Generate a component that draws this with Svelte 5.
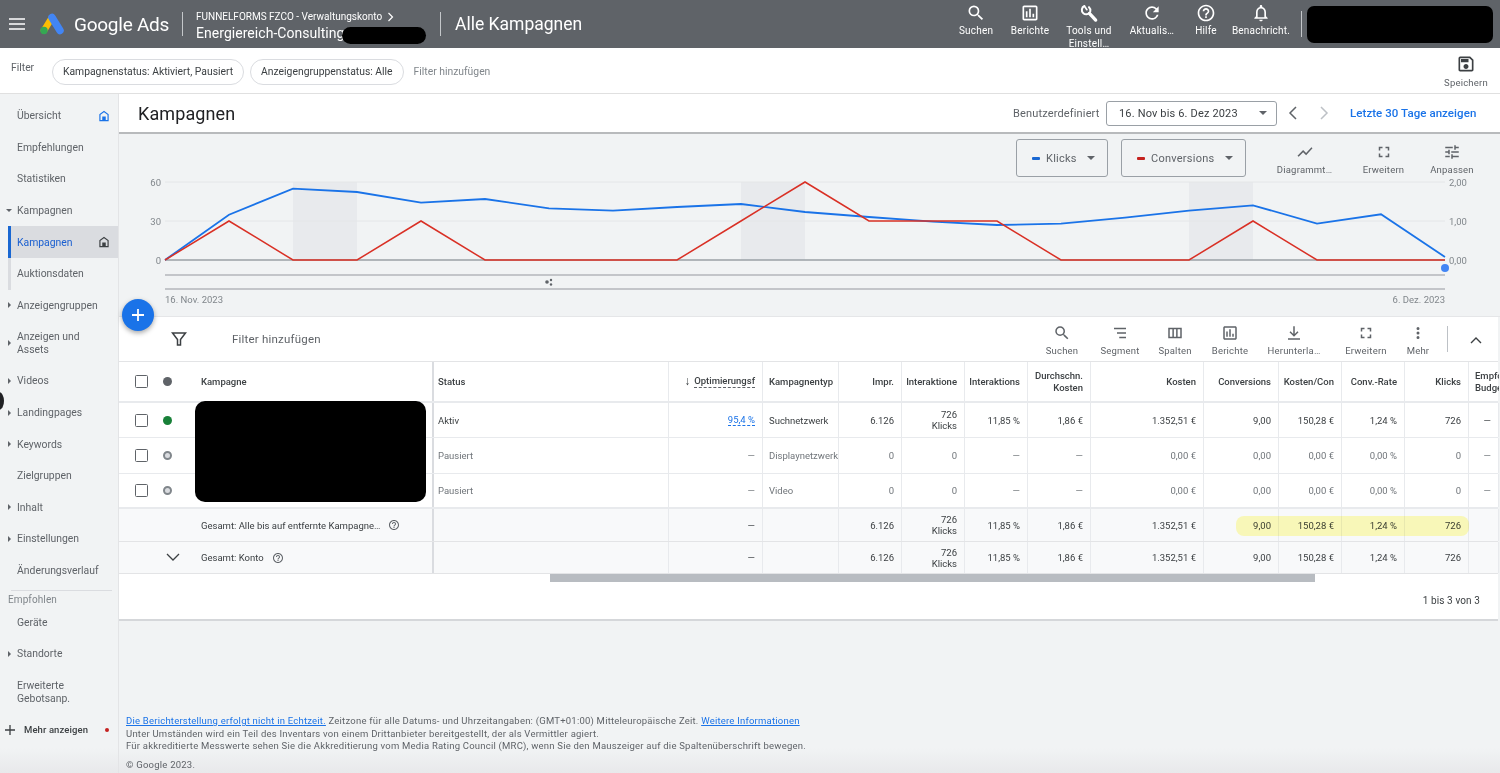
<script>
  const icons = {
    search: 'M15.5 14h-.79l-.28-.27A6.471 6.471 0 0 0 16 9.5 6.5 6.5 0 1 0 9.5 16c1.61 0 3.09-.59 4.23-1.57l.27.28v.79l5 4.99L20.49 19l-4.99-5zm-6 0C7.01 14 5 11.99 5 9.5S7.01 5 9.5 5 14 7.01 14 9.5 11.99 14 9.5 14z',
    report: 'M19 3H5c-1.1 0-2 .9-2 2v14c0 1.1.9 2 2 2h14c1.1 0 2-.9 2-2V5c0-1.1-.9-2-2-2zm0 16H5V5h14v14zM7 10h2v7H7zm4-3h2v10h-2zm4 6h2v4h-2z',
    refresh: 'M17.65 6.35A7.958 7.958 0 0 0 12 4c-4.42 0-7.99 3.58-7.99 8s3.57 8 7.99 8c3.73 0 6.84-2.55 7.73-6h-2.08A5.99 5.99 0 0 1 12 18c-3.31 0-6-2.69-6-6s2.69-6 6-6c1.66 0 3.14.69 4.22 1.78L13 11h7V4l-2.35 2.35z',
    help: 'M11 18h2v-2h-2v2zm1-16C6.48 2 2 6.48 2 12s4.48 10 10 10 10-4.48 10-10S17.52 2 12 2zm0 18c-4.41 0-8-3.59-8-8s3.59-8 8-8 8 3.59 8 8-3.59 8-8 8zm0-14c-2.21 0-4 1.79-4 4h2c0-1.1.9-2 2-2s2 .9 2 2c0 2-3 1.75-3 5h2c0-2.25 3-2.5 3-5 0-2.21-1.79-4-4-4z',
    bell: 'M12 22c1.1 0 2-.9 2-2h-4c0 1.1.9 2 2 2zm6-6v-5c0-3.07-1.63-5.64-4.5-6.32V4c0-.83-.67-1.5-1.5-1.5s-1.5.67-1.5 1.5v.68C7.64 5.36 6 7.92 6 11v5l-2 2v1h16v-1l-2-2zm-2 1H8v-6c0-2.48 1.51-4.5 4-4.5s4 2.02 4 4.5v6z',
    save: 'M17 3H5a2 2 0 0 0-2 2v14c0 1.1.9 2 2 2h14c1.1 0 2-.9 2-2V7l-4-4zm2 16H5V5h11.17L19 7.83V19zm-7-7c-1.66 0-3 1.34-3 3s1.34 3 3 3 3-1.34 3-3-1.34-3-3-3zM6 6h9v4H6z',
    chart: 'M3.5 18.49l6-6.01 4 4L22 6.92l-1.41-1.41-7.09 7.97-4-4L2 16.99z',
    full: 'M7 14H5v5h5v-2H7v-3zm-2-4h2V7h3V5H5v5zm12 7h-3v2h5v-5h-2v3zM14 5v2h3v3h2V5h-5z',
    tune: 'M3 17v2h6v-2H3zM3 5v2h10V5H3zm10 16v-2h8v-2h-8v-2h-2v6h2zM7 9v2H3v2h4v2h2V9H7zm14 4v-2H11v2h10zm-6-4h2V7h4V5h-4V3h-2v6z',
    segment: 'M4 5h16v2H4zM8 11h12v2H8zM11 17h9v2h-9z',
    columns: 'M3 5h18v14H3zm2 2v10h3.5V7zm5.5 0v10h3V7zm5 0v10H19V7z',
    download: 'M13 3h-2v10.2L7.4 9.6 6 11l6 6 6-6-1.4-1.4-3.6 3.6zM4 19v2h16v-2z',
    more: 'M12 8a2 2 0 1 0 0-4 2 2 0 0 0 0 4zm0 2a2 2 0 1 0 0 4 2 2 0 0 0 0-4zm0 6a2 2 0 1 0 0 4 2 2 0 0 0 0-4z',
    home: 'M12 3 4 9v12h16V9zm6 16h-3v-6H9v6H6v-9l6-4.5 6 4.5z',
  };

  const topActions = [
    { icon: 'search', label: 'Suchen', w: 54 },
    { icon: 'report', label: 'Berichte', w: 54 },
    { icon: 'wrench', label: 'Tools und Einstell…', w: 64, wrap: true },
    { icon: 'refresh', label: 'Aktualis…', w: 62 },
    { icon: 'help', label: 'Hilfe', w: 46 },
    { icon: 'bell', label: 'Benachricht.', w: 64 },
  ];

  const chartTools = [
    { icon: 'chart', label: 'Diagrammt…', w: 79 },
    { icon: 'full', label: 'Erweitern', w: 79 },
    { icon: 'tune', label: 'Anpassen', w: 58 },
  ];

  const tableTools = [
    { icon: 'search', label: 'Suchen', w: 58 },
    { icon: 'segment', label: 'Segment', w: 58 },
    { icon: 'columns', label: 'Spalten', w: 52 },
    { icon: 'report', label: 'Berichte', w: 58 },
    { icon: 'download', label: 'Herunterla…', w: 70 },
    { icon: 'full', label: 'Erweitern', w: 74 },
    { icon: 'more', label: 'Mehr', w: 30 },
  ];

  const nav = [
    { t: 'Übersicht', home: 'blue' },
    { t: 'Empfehlungen' },
    { t: 'Statistiken' },
    { t: 'Kampagnen', arrow: 'down' },
    { t: 'Kampagnen', sel: true, home: 'dark', sub: true },
    { t: 'Auktionsdaten', sub: true },
    { t: 'Anzeigengruppen', arrow: 'right' },
    { t: 'Anzeigen und\nAssets', arrow: 'right', tall: true },
    { t: 'Videos', arrow: 'right' },
    { t: 'Landingpages', arrow: 'right' },
    { t: 'Keywords', arrow: 'right' },
    { t: 'Zielgruppen' },
    { t: 'Inhalt', arrow: 'right' },
    { t: 'Einstellungen', arrow: 'right' },
    { t: 'Änderungsverlauf' },
  ];
  const nav2 = [
    { t: 'Geräte' },
    { t: 'Standorte', arrow: 'right' },
    { t: 'Erweiterte\nGebotsanp.', tall: true },
  ];

  const rows = [
    { dot: 'on', status: 'Aktiv', opt: '95,4 %', type: 'Suchnetzwerk', v: ['6.126', '726\nKlicks', '11,85 %', '1,86 €', '1.352,51 €', '9,00', '150,28 €', '1,24 %', '726', '—'] },
    { dot: 'off', status: 'Pausiert', opt: '—', type: 'Displaynetzwerk', v: ['0', '0', '—', '—', '0,00 €', '0,00', '0,00 €', '0,00 %', '0', '—'], dim: true },
    { dot: 'off', status: 'Pausiert', opt: '—', type: 'Video', v: ['0', '0', '—', '—', '0,00 €', '0,00', '0,00 €', '0,00 %', '0', '—'], dim: true },
  ];
  const totals = ['6.126', '726\nKlicks', '11,85 %', '1,86 €', '1.352,51 €', '9,00', '150,28 €', '1,24 %', '726', ''];

  const heads = ['Impr.', 'Interaktione', 'Interaktions', 'Durchschn.\nKosten', 'Kosten', 'Conversions', 'Kosten/Con', 'Conv.-Rate', 'Klicks'];

  const X = (i) => 165 + i * 64;
  const blue = [260, 214.7, 188.7, 192, 202.7, 199, 208.3, 210.7, 207, 204, 212, 217, 221.6, 225, 223.7, 217.7, 210.7, 205.3, 223.7, 214.3, 257];
  const red = [260, 221, 260, 260, 221, 260, 260, 260, 260, 221, 182, 221, 221, 221, 260, 260, 260, 221, 260, 260, 260];
  const pts = (a) => a.map((y, i) => `${X(i)},${y - 134}`).join(' ');
  const bands = [293, 741, 1189];
</script>

{#snippet icon(name, size = 20)}
  {#if name === 'wrench'}
    <svg class="ico" width={size} height={size} viewBox="0 0 24 24" fill="none" stroke="currentColor" stroke-linecap="round">
      <path d="M6.500 3.600A5.200 5.200 0 1 0 13.600 9.800 5.200 5.200 0 0 0 12 5" stroke-width="2.400" />
      <path d="M12.500 12.500 20 20.500" stroke-width="4" />
      <path d="M7 4.500 9.500 8" stroke-width="2" />
    </svg>
  {:else}
    <svg class="ico" width={size} height={size} viewBox="0 0 24 24"><path d={icons[name]} fill="currentColor" /></svg>
  {/if}
{/snippet}

{#snippet hint()}
  <svg class="hint" width="12" height="12" viewBox="0 0 24 24"><path d={icons.help} fill="currentColor" /></svg>
{/snippet}

{#snippet cells(values, dim)}
  {#each values as val}
    <div class="cell right" class:dim>{#each val.split('\n') as line}<span class="ln">{line}</span>{/each}</div>
  {/each}
{/snippet}

<div class="page">
  <span class="edge"></span>

  <header class="top">
    <svg class="burger" width="16" height="12" viewBox="0 0 16 12"><path d="M0 1h16M0 6h16M0 11h16" stroke="#fff" stroke-width="1.7" /></svg>
    <svg class="logo" width="24" height="22" viewBox="0 0 24 22">
      <path d="M12 4.500 4 17.500" stroke="#fbbc04" stroke-width="6.500" stroke-linecap="round" />
      <path d="M12 4.500 20 17.500" stroke="#4285f4" stroke-width="7.500" stroke-linecap="round" />
      <circle cx="4" cy="17.500" r="3.700" fill="#34a853" />
    </svg>
    <span class="brand">Google Ads</span>
    <span class="vr first"></span>
    <div class="acct">
      <div class="acct-top">FUNNELFORMS FZCO - Verwaltungskonto
        <svg width="9" height="10" viewBox="0 0 9 10"><path d="M2.500 1l4 4-4 4" fill="none" stroke="#fff" stroke-width="1.200" /></svg>
      </div>
      <div class="acct-name"><span class="acct-text">Energiereich-Consulting</span><span class="mask pill"></span></div>
    </div>
    <span class="vr second"></span>
    <span class="page-title">Alle Kampagnen</span>
    <nav class="top-actions">
      {#each topActions as a}
        <div class="top-act" style="width:{a.w}px">
          {@render icon(a.icon, 20)}
          <span class="top-label" class:wrap={a.wrap}>{a.label}</span>
        </div>
      {/each}
    </nav>
    <span class="vr third"></span>
    <span class="mask account"></span>
  </header>

  <section class="filters">
    <span class="f-label">Filter</span>
    <span class="chip">Kampagnenstatus: Aktiviert, Pausiert</span>
    <span class="chip">Anzeigengruppenstatus: Alle</span>
    <span class="f-add">Filter hinzufügen</span>
    <div class="save">
      {@render icon('save', 20)}
      <span>Speichern</span>
    </div>
  </section>

  <div class="body">
    <aside class="side">
      {#snippet navItem(n)}
        <div class="nav" class:sel={n.sel} class:tall={n.tall} class:sub={n.sub}>
          {#if n.arrow}<span class="arr {n.arrow}"></span>{/if}
          <span class="nav-t">{#each n.t.split('\n') as line}<span class="ln">{line}</span>{/each}</span>
          {#if n.home}
            <svg class="home {n.home}" width="14" height="14" viewBox="0 0 24 24"><path d={icons.home} fill="currentColor" /></svg>
          {/if}
        </div>
      {/snippet}
      {#each nav as n}{@render navItem(n)}{/each}
      <div class="side-rule"></div>
      <div class="side-head">Empfohlen</div>
      {#each nav2 as n}{@render navItem(n)}{/each}
      <div class="more-row">
        <svg width="12" height="12" viewBox="0 0 12 12"><path d="M6 1v10M1 6h10" stroke="#3c4043" stroke-width="1.300" /></svg>
        <span>Mehr anzeigen</span>
        <i></i>
      </div>
    </aside>

    <main class="main">
      <span class="fab">
        <svg width="16" height="16" viewBox="0 0 16 16"><path d="M8 2v12M2 8h12" stroke="#fff" stroke-width="1.800" /></svg>
      </span>

      <div class="sub-head">
        <h1>Kampagnen</h1>
        <span class="range-label">Benutzerdefiniert</span>
        <div class="range">16. Nov bis 6. Dez 2023<span class="caret"></span></div>
        <svg class="nav-chev" width="10" height="14" viewBox="0 0 10 14"><path d="M8 1 2 7l6 6" fill="none" stroke="#5f6368" stroke-width="1.500" /></svg>
        <svg class="nav-chev faint" width="10" height="14" viewBox="0 0 10 14"><path d="M2 1l6 6-6 6" fill="none" stroke="#bdc1c6" stroke-width="1.500" /></svg>
        <span class="last30">Letzte 30 Tage anzeigen</span>
      </div>

      <section class="chart-panel">
        <div class="chart-tools">
          <div class="metric klicks"><i class="b"></i>Klicks<span class="caret"></span></div>
          <div class="metric conv"><i class="r"></i>Conversions<span class="caret"></span></div>
          {#each chartTools as t}
            <div class="tool" style="width:{t.w}px">
              {@render icon(t.icon, 18)}
              <span>{t.label}</span>
            </div>
          {/each}
        </div>
        <svg class="plot" width="1381" height="182" viewBox="119 0 1381 182">
          {#each bands as b}<rect x={b} y="48" width="64" height="78" fill="#e8eaed" />{/each}
          <path d="M165 48H1445M165 87H1445" stroke="#e4e6e8" stroke-width="1" />
          <path d="M165 126H1445" stroke="#9aa0a6" stroke-width="1.500" />
          <path d="M165 141H1445M165 155H1445" stroke="#b4b7ba" stroke-width="1.500" />
          <polyline points={pts(blue)} fill="none" stroke="#1a73e8" stroke-width="1.800" />
          <polyline points={pts(red)} fill="none" stroke="#d93025" stroke-width="1.500" />
          <circle cx="1445" cy="134" r="4" fill="#4285f4" />
          <g class="tick">
            <text x="161" y="52" text-anchor="end">60</text>
            <text x="161" y="91" text-anchor="end">30</text>
            <text x="161" y="130" text-anchor="end">0</text>
            <text x="1449" y="52">2,00</text>
            <text x="1449" y="91">1,00</text>
            <text x="1449" y="130">0,00</text>
            <text x="165" y="169">16. Nov. 2023</text>
            <text x="1445" y="169" text-anchor="end">6. Dez. 2023</text>
          </g>
          <g fill="#5f6368"><circle cx="547" cy="148" r="1.800" /><circle cx="551" cy="146" r="1.200" /><circle cx="551" cy="150.500" r="1.200" /></g>
        </svg>
      </section>

      <section class="panel">
        <div class="table-tools">
          <svg class="funnel" width="16" height="16" viewBox="0 0 16 16"><path d="M1.500 2h13L9.500 8.500V14h-3V8.500z" fill="none" stroke="#3c4043" stroke-width="1.500" /></svg>
          <span class="t-add">Filter hinzufügen</span>
          <div class="t-icons">
            {#each tableTools as t}
              <div class="tool" style="width:{t.w}px">
                {@render icon(t.icon, 18)}
                <span>{t.label}</span>
              </div>
            {/each}
          </div>
          <span class="t-rule"></span>
          <svg class="collapse" width="12" height="8" viewBox="0 0 12 8"><path d="M1 7l5-5 5 5" fill="none" stroke="#3c4043" stroke-width="1.400" /></svg>
        </div>

        <div class="grid">
          <div class="row head">
            <div class="cell frozen">
              <span class="box"></span>
              <span class="dot all"></span>
              <span class="c-name strong">Kampagne</span>
            </div>
            <div class="cell strong">Status</div>
            <div class="cell right strong opt-head"><span class="sort">↓</span><span class="dashed">Optimierungsf</span></div>
            <div class="cell strong clip">Kampagnentyp</div>
            {#each heads as h}
              <div class="cell right strong">{#each h.split('\n') as line}<span class="ln">{line}</span>{/each}</div>
            {/each}
            <div class="cell strong budget"><span class="ln">Empfohl.</span><span class="ln">Budget</span></div>
          </div>

          {#each rows as r, i}
            <div class="row data" class:short={i !== 1}>
              <div class="cell frozen">
                <span class="box"></span>
                <span class="dot {r.dot}"></span>
              </div>
              <div class="cell" class:dim={r.dim}>{r.status}</div>
              <div class="cell right" class:dim={r.dim}>
                {#if r.opt.includes('%')}<span class="opt">{r.opt}</span>{:else}{r.opt}{/if}
              </div>
              <div class="cell clip" class:dim={r.dim}>{r.type}</div>
              {@render cells(r.v, r.dim)}
            </div>
          {/each}

          <span class="mask names"></span>

          <div class="row total">
            <span class="glow"></span>
            <div class="cell frozen"><span class="c-name wide">Gesamt: Alle bis auf entfernte Kampagne…</span>{@render hint()}</div>
            <div class="cell"></div>
            <div class="cell right">—</div>
            <div class="cell"></div>
            {@render cells(totals, false)}
          </div>
          <div class="row total">
            <div class="cell frozen">
              <svg class="expand" width="14" height="8" viewBox="0 0 14 8"><path d="M1 1l6 6 6-6" fill="none" stroke="#3c4043" stroke-width="1.300" /></svg>
              <span class="c-name">Gesamt: Konto</span>{@render hint()}
            </div>
            <div class="cell"></div>
            <div class="cell right">—</div>
            <div class="cell"></div>
            {@render cells(totals, false)}
          </div>
        </div>

        <div class="scrolltrack"><span></span></div>
        <div class="pager">1 bis 3 von 3</div>
      </section>

      <footer class="foot">
        <p><a href="#a">Die Berichterstellung erfolgt nicht in Echtzeit.</a> Zeitzone für alle Datums- und Uhrzeitangaben: (GMT+01:00) Mitteleuropäische Zeit. <a href="#b">Weitere Informationen</a></p>
        <p>Unter Umständen wird ein Teil des Inventars von einem Drittanbieter bereitgestellt, der als Vermittler agiert.</p>
        <p>Für akkreditierte Messwerte sehen Sie die Akkreditierung vom Media Rating Council (MRC), wenn Sie den Mauszeiger auf die Spaltenüberschrift bewegen.</p>
        <p class="copy">© Google 2023.</p>
      </footer>
    </main>
  </div>
</div>

<style>
  :global(body) { margin: 0; font-family: Roboto, "Liberation Sans", sans-serif; color: #3c4043; }
  .page {
    position: relative; width: 1500px; height: 773px; overflow: hidden; display: flex; flex-direction: column;
    background: linear-gradient(#f1f3f4 748px, #e8e9eb 773px);
  }
  .ln { display: block; }
  .ico { display: block; flex: none; }
  .mask { background: #000; display: inline-block; }
  .edge { position: absolute; left: -6px; top: 392px; width: 10px; height: 18px; border-radius: 50%; background: #202124; }

  /* top bar */
  .top { height: 48px; flex: none; background: #5f6368; color: #fff; display: flex; align-items: center; box-shadow: 0 1px 0 #4d5054; }
  .burger { margin-left: 9px; flex: none; }
  .logo { margin-left: 15px; flex: none; }
  .brand { margin-left: 10px; font-size: 19px; width: 93px; white-space: nowrap; letter-spacing: -.25px; }
  .vr { width: 1px; background: #c4c7ca; flex: none; height: 24px; }
  .vr.first { margin-left: 15px; }
  .vr.third { height: 26px; margin-left: 8px; }
  .acct { margin-left: 13px; width: 244px; align-self: flex-start; padding-top: 11px; }
  .acct-top { font-size: 10px; line-height: 12px; display: flex; gap: 4px; align-items: center; white-space: nowrap; }
  .acct-name { font-size: 14px; line-height: 17px; display: flex; align-items: center; white-space: nowrap; }
  .acct-text { width: 145px; letter-spacing: .04px; }
  .pill { width: 84px; height: 17px; border-radius: 9px; margin: 4px 0 0 1px; }
  .page-title { margin-left: 14px; font-size: 17.500px; white-space: nowrap; width: 135px; }
  .top-actions { display: flex; margin-left: 359px; align-self: stretch; }
  .top-act { display: flex; flex-direction: column; align-items: center; padding-top: 3px; box-sizing: border-box; }
  .top-label { font-size: 10px; line-height: 13px; margin-top: 1px; text-align: center; white-space: nowrap; letter-spacing: .2px; }
  .top-label.wrap { white-space: normal; width: 50px; }
  .account { width: 186px; height: 37px; border-radius: 7px; margin-left: 5px; flex: none; }

  /* filter row */
  .filters { height: 46px; flex: none; background: #fff; border-bottom: 1px solid #e0e0e0; display: flex; align-items: center; box-sizing: border-box; font-size: 10.350px; position: relative; }
  .f-label { margin-left: 11px; width: 41px; color: #5f6368; margin-top: -7px; }
  .chip { border: 1px solid #dadce0; border-radius: 14px; height: 26px; box-sizing: border-box; line-height: 24px; padding: 0 10px; margin-right: 6px; white-space: nowrap; margin-top: 2px; }
  .f-add { margin-left: 4px; color: #80868b; margin-top: 2px; }
  .save { margin-left: auto; width: 66px; display: flex; flex-direction: column; align-items: center; color: #5f6368; gap: 3px; padding-right: 1px; }
  .save span { font-size: 9.500px; letter-spacing: .2px; }
  .save :global(svg) { color: #3c4043; }

  /* body */
  .body { flex: 1; display: flex; min-height: 0; }
  .side { width: 119px; flex: none; border-right: 1px solid #e3e4e6; box-sizing: border-box; padding-top: 6px; font-size: 10.400px; color: #5f6368; }
  .nav { position: relative; height: 31.600px; display: flex; align-items: center; padding-left: 17px; box-sizing: border-box; line-height: 13px; }
  .nav.tall { height: 44px; }
  .nav.sub::before { content: ""; position: absolute; left: 8px; top: 0; bottom: 0; width: 3px; background: #dadce0; }
  .nav.sel { background: linear-gradient(90deg, transparent 8px, #dadce0 8px); color: #1a5fd0; }
  .nav.sel::before { background: #1967d2; }
  .arr { position: absolute; left: 7px; top: 50%; width: 0; height: 0; }
  .arr.right { margin-top: -3px; border-left: 3px solid #5f6368; border-top: 3px solid transparent; border-bottom: 3px solid transparent; margin-left: 1px; }
  .arr.down { margin-top: -1.500px; left: 6px; border-top: 3px solid #5f6368; border-left: 3px solid transparent; border-right: 3px solid transparent; }
  .home { position: absolute; left: 97px; top: 50%; margin-top: -7px; }
  .home.blue { color: #1a73e8; }
  .home.dark { color: #3c4043; }
  .side-rule { height: 1px; background: #dadce0; margin: 4px 6px 3px 11px; }
  .side-head { font-size: 10px; color: #80868b; padding-left: 8px; line-height: 12px; letter-spacing: .1px; }
  .more-row { display: flex; align-items: center; height: 32px; font-size: 9.500px; font-weight: 500; color: #3c4043; padding-left: 4px; position: relative; }
  .more-row span { margin-left: 8px; letter-spacing: .1px; }
  .more-row i { position: absolute; left: 105px; top: 14px; width: 4px; height: 4px; border-radius: 50%; background: #c5221f; }

  /* main */
  .main { flex: 1; min-width: 0; position: relative; display: flex; flex-direction: column; }
  .fab { position: absolute; left: 3px; top: 205px; width: 32px; height: 32px; border-radius: 50%; background: #1a73e8; display: grid; place-items: center; box-shadow: 0 2px 5px rgba(0,0,0,.35); z-index: 3; }
  .sub-head { height: 40px; flex: none; background: #fff; border-bottom: 2px solid #b8babc; box-sizing: border-box; display: flex; align-items: center; padding-left: 19px; font-size: 11px; color: #5f6368; }
  h1 { font-size: 18px; font-weight: 400; color: #202124; margin: 0; width: 875px; letter-spacing: .1px; }
  .range-label { width: 93px; white-space: nowrap; letter-spacing: .15px; }
  .range { width: 171px; height: 25px; border: 1px solid #9aa0a6; border-radius: 3px; box-sizing: border-box; line-height: 23px; padding-left: 12px; color: #3c4043; position: relative; letter-spacing: .16px; }
  .caret { position: absolute; width: 0; height: 0; border-top: 4px solid #5f6368; border-left: 4px solid transparent; border-right: 4px solid transparent; right: 9px; top: 50%; margin-top: -2px; }
  .nav-chev { margin-left: 11px; flex: none; }
  .nav-chev.faint { margin-left: 21px; }
  .last30 { margin-left: 21px; color: #1a73e8; font-size: 11.500px; font-weight: 500; white-space: nowrap; letter-spacing: .06px; }

  .chart-panel { height: 183px; flex: none; position: relative; border-bottom: 1px solid #e5e6e8; box-sizing: border-box; }
  .chart-tools { position: absolute; top: 5px; left: 897px; display: flex; align-items: flex-start; color: #5f6368; }
  .metric { position: relative; height: 38px; border: 1px solid #9aa0a6; border-radius: 3px; box-sizing: border-box; display: flex; align-items: center; font-size: 11px; letter-spacing: .25px; }
  .metric i { width: 8px; height: 3px; margin: 0 6px 0 15px; border-radius: 1px; }
  .metric i.b { background: #1967d2; }
  .metric i.r { background: #c5221f; }
  .metric .caret { right: 12px; }
  .klicks { width: 92px; margin-right: 13px; }
  .conv { width: 125px; margin-right: 19px; }
  .tool { display: flex; flex-direction: column; align-items: center; font-size: 9.500px; line-height: 12px; color: #5f6368; white-space: nowrap; letter-spacing: .2px; }
  .tool span { margin-top: 3px; }
  .chart-tools .tool { padding-top: 4px; }
  .plot { display: block; }
  .tick text { font-size: 9.500px; fill: #80868b; font-family: Roboto, sans-serif; }

  /* table panel */
  .panel { background: #fff; width: 1379px; height: 304px; flex: none; border-bottom: 2px solid #d5d7da; box-sizing: border-box; position: relative; }
  .table-tools { height: 45px; display: flex; align-items: center; position: relative; border-bottom: 1px solid #e3e4e6; box-sizing: border-box; }
  .funnel { margin-left: 52px; flex: none; }
  .t-add { margin-left: 45px; font-size: 11.500px; color: #5f6368; letter-spacing: .2px; }
  .t-icons { margin-left: auto; display: flex; margin-right: 65px; margin-top: 3px; }
  .t-rule { position: absolute; left: 1328px; top: 9px; height: 26px; width: 1px; background: #bdc1c6; }
  .collapse { position: absolute; left: 1351px; top: 19px; }

  .grid { position: relative; font-size: 9.500px; }
  .row {
    position: relative; display: grid;
    grid-template-columns: 315px 235px 94px 76px 63px 63px 63px 63px 113px 75px 63px 63px 64px 30px;
    border-bottom: 1px solid #e8eaed; box-sizing: border-box;
  }
  .row.head { height: 41px; border-bottom-width: 2px; }
  .row.data { height: 36px; }
  .row.data.short { height: 35px; }
  .row.total { height: 33px; background: #f8f9fa; border-bottom-color: #e3e4e6; }
  .row.total:last-of-type { height: 32px; }
  .row.data:nth-child(4) { border-bottom-width: 2px; }
  .cell { position: relative; z-index: 1; display: flex; flex-direction: column; justify-content: center; padding: 0 6px 0 4px; border-right: 1px solid #e8eaed; box-sizing: border-box; line-height: 11px; color: #3c4043; white-space: nowrap; overflow: hidden; min-width: 0; }
  .cell.right { align-items: flex-end; text-align: right; padding-right: 7px; }
  .cell.right .ln { text-align: right; }
  .cell.clip { padding-left: 6px; padding-right: 0; }
  .cell.dim { color: #70757a; }
  .cell.budget { border-right: 0; padding-left: 6px; }
  .strong { font-weight: 500; }
  .head .cell { line-height: 11.500px; }
  .head .cell.opt-head { flex-direction: row; align-items: center; justify-content: flex-end; }
  .sort { font-size: 12px; margin-right: 4px; font-weight: 400; }
  .dashed { border-bottom: 1px dashed #5f6368; padding-bottom: 1px; }
  .opt { color: #1a73e8; border-bottom: 1px dashed #1a73e8; }

  .frozen { flex-direction: row; align-items: center; justify-content: flex-start; padding: 0; border-right: 2px solid #dadce0; position: relative; }
  .box { position: absolute; left: 16px; top: 50%; margin-top: -6.500px; width: 13px; height: 13px; box-sizing: border-box; border: 1.500px solid #5f6368; border-radius: 1.500px; }
  .dot { position: absolute; left: 44px; top: 50%; margin-top: -4.500px; width: 9px; height: 9px; border-radius: 50%; box-sizing: border-box; }
  .dot.all { background: #5f6368; }
  .dot.on { background: #188038; }
  .dot.off { background: #dadce0; border: 2.500px solid #80868b; }
  .c-name { margin-left: 82px; }
  .c-name.strong { font-weight: 500; }
  .hint { margin-left: 8px; color: #5f6368; flex: none; }
  .expand { position: absolute; left: 47px; top: 11px; }
  .mask.names { position: absolute; left: 76px; top: 39px; width: 231px; height: 101px; border-radius: 10px; z-index: 2; }
  .glow { position: absolute; left: 1117px; top: 7px; width: 233px; height: 20px; border-radius: 8px; background: #fffdbc; mix-blend-mode: multiply; z-index: 2; }

  .scrolltrack { height: 8px; position: relative; }
  .scrolltrack span { position: absolute; left: 431px; width: 765px; top: 0; height: 8px; background: #b8bcc1; }
  .pager { text-align: right; padding: 13px 18px 0 0; font-size: 10px; color: #3c4043; letter-spacing: .1px; }

  .foot { margin-top: auto; padding: 0 0 2px 7px; font-size: 9.500px; color: #5f6368; letter-spacing: .22px; }
  .foot p { margin: 0; line-height: 12.500px; white-space: nowrap; }
  .foot a { color: #1a73e8; }
  .foot .copy { margin-top: 6px; }
</style>
